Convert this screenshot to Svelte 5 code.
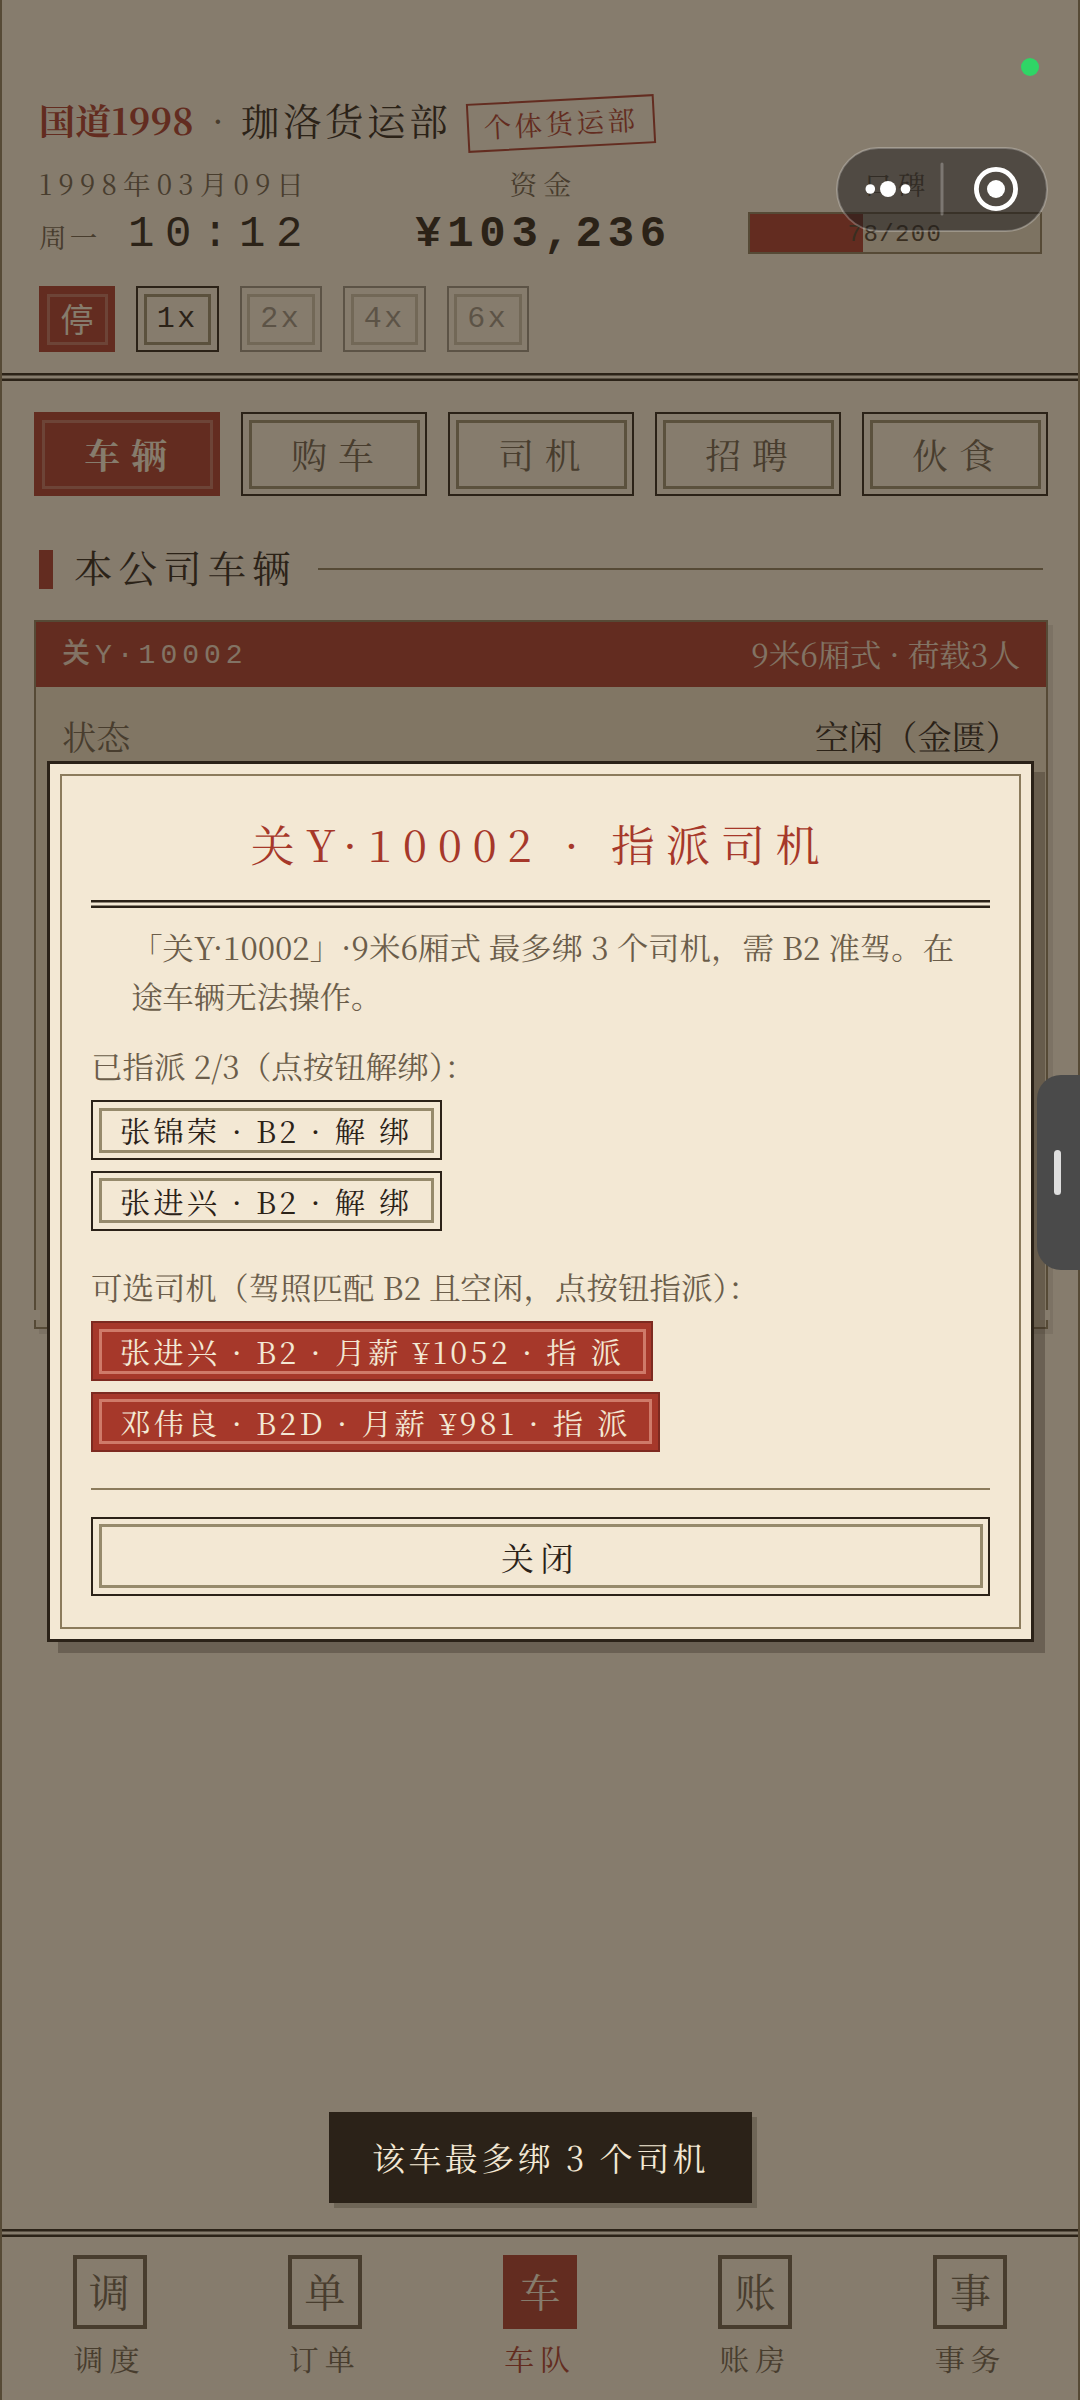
<script lang="ts">
  const speeds = ['1x', '2x', '4x', '6x'];
  const tabs = ['车辆', '购车', '司机', '招聘', '伙食'];
  const navItems = [
    { icon: '调', label: '调度' },
    { icon: '单', label: '订单' },
    { icon: '车', label: '车队' },
    { icon: '账', label: '账房' },
    { icon: '事', label: '事务' },
  ];
  const assigned = ['张锦荣', '张进兴'];
  const candidates = [
    { name: '张进兴', licence: 'B2', wage: 1052 },
    { name: '邓伟良', licence: 'B2D', wage: 981 },
  ];
  const reputation = { value: 78, max: 200 };

  let speed = $state('停');
  let tab = $state('车辆');
  let nav = $state('车队');
</script>

<div class="page">
  <header>
    <div class="title">
      <span class="brand">国道1998</span>
      <span class="dot">·</span>
      <span class="company">珈洛货运部</span>
      <span class="stamp">个体货运部</span>
    </div>
    <div class="stats">
      <div class="stat">
        <div class="caption">1998年03月09日</div>
        <div class="clock"><span class="weekday">周一</span><span class="time">10:12</span></div>
      </div>
      <div class="stat center">
        <div class="caption">资金</div>
        <div class="money">¥103,236</div>
      </div>
      <div class="stat center">
        <div class="caption">口碑</div>
        <div class="bar">
          <div class="fill" style="width: {(reputation.value / reputation.max) * 100}%"></div>
          <span>{reputation.value}/{reputation.max}</span>
        </div>
      </div>
    </div>
    <div class="speeds">
      <button class="framed stop" class:active={speed === '停'} onclick={() => (speed = '停')}>停</button>
      {#each speeds as s, i}
        <button class="framed" disabled={i > 0} onclick={() => (speed = s)}>{s}</button>
      {/each}
    </div>
  </header>
  <div class="rule"></div>

  <main>
    <div class="tabs">
      {#each tabs as t}
        <button class="framed" class:active={tab === t} onclick={() => (tab = t)}>{t}</button>
      {/each}
    </div>
    <h2><span>本公司车辆</span></h2>
    <section class="card">
      <div class="card-head">
        <span class="plate"><b>关</b>Y·10002</span>
        <span class="model">9米6厢式 · 荷载3人</span>
      </div>
      <div class="row">
        <span class="key">状态</span>
        <span>空闲（金匮）</span>
      </div>
    </section>
  </main>

  <div class="rule"></div>
  <nav>
    {#each navItems as item}
      <button class:active={nav === item.label} onclick={() => (nav = item.label)}>
        <span class="icon">{item.icon}</span>
        <span class="label">{item.label}</span>
      </button>
    {/each}
  </nav>

  <div class="overlay">
    <div class="modal">
      <h1>关Y·10002 · 指派司机</h1>
      <div class="rule"></div>
      <p class="desc">「关Y·10002」·9米6厢式 最多绑 3 个司机，需 B2 准驾。在途车辆无法操作。</p>
      <p class="hint">已指派 2/3（点按钮解绑）：</p>
      <div class="list">
        {#each assigned as name}
          <button class="framed small">{name} · B2 · 解 绑</button>
        {/each}
      </div>
      <p class="hint second">可选司机（驾照匹配 B2 且空闲，点按钮指派）：</p>
      <div class="list">
        {#each candidates as c}
          <button class="framed small primary">{c.name} · {c.licence} · 月薪 ¥{c.wage} · 指 派</button>
        {/each}
      </div>
      <div class="foot">
        <button class="framed close">关闭</button>
      </div>
    </div>
  </div>

  <div class="toast">该车最多绑 3 个司机</div>

  <div class="status-dot"></div>
  <div class="capsule">
    <svg width="212" height="85" viewBox="0 0 212 85">
      <rect x="1" y="1" width="210" height="83" rx="41.5" fill="rgba(30,28,28,.52)" stroke="rgba(255,255,255,.25)" stroke-width="2" />
      <circle cx="34.3" cy="42" r="4.8" fill="#fff" />
      <circle cx="52" cy="42" r="8" fill="#fff" />
      <circle cx="69.5" cy="42" r="4.8" fill="#fff" />
      <path d="M106 17v50" stroke="rgba(255,255,255,.25)" stroke-width="3" stroke-linecap="round" />
      <circle cx="160" cy="42" r="19.6" fill="none" stroke="#fff" stroke-width="4.8" />
      <circle cx="160" cy="42" r="9" fill="#fff" />
    </svg>
  </div>
  <div class="handle"><i></i></div>
</div>

<style>
:global(body) {
  background: #f3e8d4;
}

.page {
  --ink: #2b2218;
  --muted: #6b5d4a;
  --line: #8b7b5c;
  --paper: #f3e8d4;
  --red: #a6382a;
  position: relative;
  box-sizing: border-box;
  width: 1080px;
  height: 2400px;
  overflow: hidden;
  display: flex;
  flex-direction: column;
  padding: 0 2px;
  background: var(--paper);
  box-shadow: inset 2px 0 var(--line), inset -2px 0 var(--line);
  color: var(--ink);
  font-family: 'Noto Serif SC', 'Noto Serif CJK SC', 'Liberation Serif', 'Noto Sans CJK SC', serif;
}

button {
  margin: 0;
  padding: 0;
  background: none;
  border: 0;
  color: inherit;
  font: inherit;
}

h1,
h2,
p {
  margin: 0;
  font-weight: 400;
}

/* newspaper-style double rule */
.rule {
  flex: none;
  height: 8px;
  background: linear-gradient(var(--ink) 2px, transparent 3px 5px, var(--ink) 6px);
}

.framed {
  position: relative;
  box-sizing: border-box;
  border: 2px solid var(--ink);
}

.framed::after {
  content: '';
  position: absolute;
  inset: 5.5px;
  border: 3px solid #968a6c;
}

.framed.active {
  background: var(--red);
  border-color: var(--red);
  color: var(--paper);
}

.framed.active::after {
  border-color: rgba(243, 232, 212, 0.3);
}

header {
  box-sizing: border-box;
  height: 373px;
  padding: 88px 36px 0 37px;
}

.title {
  display: flex;
  align-items: center;
  height: 62px;
  white-space: nowrap;
}

.brand {
  width: 156px;
  color: var(--red);
  font-size: 36px;
  font-weight: 700;
  letter-spacing: 0.3px;
}

.dot {
  width: 46px;
  text-align: center;
  color: var(--muted);
  font-size: 36px;
}

.company {
  width: 226px;
  font-size: 38.5px;
  letter-spacing: 3.5px;
}

.stamp {
  box-sizing: border-box;
  width: 188px;
  height: 49px;
  margin-top: 8px;
  border: 2px solid var(--red);
  color: var(--red);
  font-size: 27.5px;
  line-height: 43px;
  letter-spacing: 3.5px;
  text-align: center;
  transform: rotate(-3deg);
}

.stats {
  display: grid;
  grid-template-columns: repeat(3, 294px);
  justify-content: space-between;
  margin-top: 12px;
}

.center {
  text-align: center;
  text-indent: 6px;
}

.caption {
  height: 47px;
  color: var(--muted);
  font-size: 27.5px;
  line-height: 42px;
  letter-spacing: 6.2px;
  white-space: nowrap;
}

.clock {
  display: flex;
  align-items: center;
  height: 50px;
}

.weekday {
  width: 89px;
  padding-top: 4px;
  color: var(--muted);
  font-size: 27.5px;
  letter-spacing: 3.3px;
}

.time,
.money {
  font-family: 'Liberation Mono', monospace;
  font-size: 44px;
  line-height: 50px;
}

.time {
  letter-spacing: 10.6px;
}

.money {
  font-weight: 700;
  letter-spacing: 5.7px;
}

.bar {
  position: relative;
  box-sizing: border-box;
  height: 42px;
  margin-top: 3px;
  border: 2px solid var(--line);
  background: #e0d4bc;
}

.fill {
  height: 100%;
  background: var(--red);
}

.bar span {
  position: absolute;
  inset: 0;
  color: #4a3c2c;
  font: 24px/42px 'Liberation Mono', monospace;
  letter-spacing: 1.4px;
  text-indent: 0;
}

.speeds {
  display: flex;
  gap: 21px;
  margin-top: 27px;
}

.speeds button {
  width: 82.5px;
  height: 66px;
  font-family: 'Liberation Mono', 'Noto Sans CJK SC', monospace;
  font-size: 30px;
  letter-spacing: 2.4px;
}

.speeds .stop {
  width: 76px;
  padding-bottom: 3px;
  font-size: 33px;
  letter-spacing: 0;
}

.speeds button:disabled {
  opacity: 0.45;
}

main {
  flex: 1;
  padding: 31px 30px 0 32px;
}

.tabs {
  display: grid;
  grid-template-columns: repeat(5, 1fr);
  gap: 21px;
}

.tabs button {
  height: 84px;
  padding: 0 0 2px 8px;
  color: var(--muted);
  font-size: 35.75px;
  letter-spacing: 11px;
}

.tabs .active {
  font-weight: 700;
}

h2 {
  display: flex;
  align-items: center;
  gap: 21px;
  height: 40px;
  margin: 53px 5px 31px 5px;
  font-size: 38.5px;
  letter-spacing: 6px;
}

h2 span {
  padding-bottom: 5px;
}

h2::before {
  content: '';
  width: 14px;
  height: 39px;
  background: var(--red);
}

h2::after {
  content: '';
  flex: 1;
  height: 2px;
  background: var(--line);
}

.card {
  position: relative;
  box-sizing: border-box;
  height: 709px;
  border: 2px solid var(--line);
  background: #e8dcc2;
  box-shadow: 5px 5px 0 rgba(43, 34, 24, 0.1);
}

/* ticket-style notches near the bottom edge */
.card::before,
.card::after {
  content: '';
  position: absolute;
  bottom: 7px;
  width: 10px;
  height: 10px;
  background: var(--paper);
}

.card::before {
  left: -6px;
}

.card::after {
  right: -4px;
}

.card-head {
  display: flex;
  justify-content: space-between;
  align-items: center;
  height: 65px;
  padding: 0 26px 0 26px;
  background: var(--red);
  color: var(--paper);
}

.plate {
  padding-bottom: 7px;
  opacity: 0.9;
  font-family: 'Liberation Mono', 'Noto Sans CJK SC', monospace;
  font-size: 28px;
  letter-spacing: 5px;
}

.plate b {
  font-weight: 500;
}

.model {
  padding-bottom: 2px;
  opacity: 0.9;
  font-size: 31.6px;
}

.row {
  display: flex;
  justify-content: space-between;
  padding: 25px 26px 0 26px;
  font-size: 34.2px;
  line-height: 48px;
}

.key {
  color: var(--muted);
}

nav {
  display: grid;
  grid-template-columns: repeat(5, 1fr);
  box-sizing: border-box;
  height: 163px;
  padding-top: 18px;
}

nav button {
  display: flex;
  flex-direction: column;
  align-items: center;
  color: var(--muted);
}

.icon {
  box-sizing: border-box;
  width: 74px;
  height: 74px;
  border: 4px solid var(--muted);
  font-size: 41px;
  line-height: 64px;
  text-align: center;
}

.label {
  margin-top: 7px;
  font-size: 30px;
  line-height: 44px;
  letter-spacing: 6px;
}

nav .active {
  color: var(--red);
}

nav .active .icon {
  background: var(--red);
  border-color: var(--red);
  color: var(--paper);
}

.overlay {
  position: absolute;
  inset: 0;
  display: flex;
  align-items: center;
  justify-content: center;
  padding-left: 1px;
  background: rgba(43, 34, 24, 0.55);
}

.modal {
  position: relative;
  box-sizing: border-box;
  width: 987px;
  height: 881px;
  margin-top: 2px;
  padding: 45px 41px 0;
  border: 3px solid var(--ink);
  background: var(--paper);
  box-shadow: 11px 11px 0 rgba(43, 34, 24, 0.3);
}

.modal::after {
  content: '';
  position: absolute;
  inset: 10px;
  border: 2px solid var(--line);
  pointer-events: none;
}

h1 {
  height: 91px;
  color: var(--red);
  font-size: 44px;
  line-height: 69px;
  letter-spacing: 10.7px;
  text-align: center;
}

.desc {
  padding: 14px 20px 0 40px;
  color: var(--muted);
  font-size: 31.45px;
  line-height: 49px;
}

.hint {
  margin-top: 21px;
  color: var(--muted);
  font-size: 31.5px;
  line-height: 49px;
}

.hint.second {
  margin-top: 31px;
}

.list {
  display: flex;
  flex-direction: column;
  align-items: flex-start;
  gap: 10.5px;
  margin-top: 10.5px;
}

.small {
  height: 60px;
  padding: 0 27px;
  font-size: 30.25px;
  letter-spacing: 3.3px;
}

.primary {
  border-color: #7d2a20;
  background: var(--red);
  color: var(--paper);
}

.primary::after {
  border-color: #cf7a69;
}

.foot {
  margin-top: 36px;
  padding-top: 27px;
  border-top: 2px solid var(--line);
}

.close {
  width: 100%;
  height: 79px;
  font-size: 33px;
  letter-spacing: 6.6px;
}

.toast {
  position: absolute;
  left: 329px;
  top: 2112px;
  box-sizing: border-box;
  width: 423px;
  height: 91px;
  background: var(--ink);
  box-shadow: 5px 5px 0 rgba(43, 34, 24, 0.25);
  color: var(--paper);
  font-size: 33px;
  line-height: 89px;
  letter-spacing: 3.4px;
  text-align: center;
}

.status-dot {
  position: absolute;
  left: 1021px;
  top: 58px;
  width: 18px;
  height: 18px;
  border-radius: 50%;
  background: #2fd566;
}

.capsule {
  position: absolute;
  left: 836px;
  top: 147px;
}

.handle {
  position: absolute;
  right: 0;
  top: 1075px;
  display: flex;
  align-items: center;
  box-sizing: border-box;
  width: 43px;
  height: 195px;
  padding-left: 17px;
  border-radius: 24px 0 0 24px;
  background: #4a4a4a;
}

.handle i {
  width: 7px;
  height: 45px;
  border-radius: 4px;
  background: #dedede;
}
</style>
